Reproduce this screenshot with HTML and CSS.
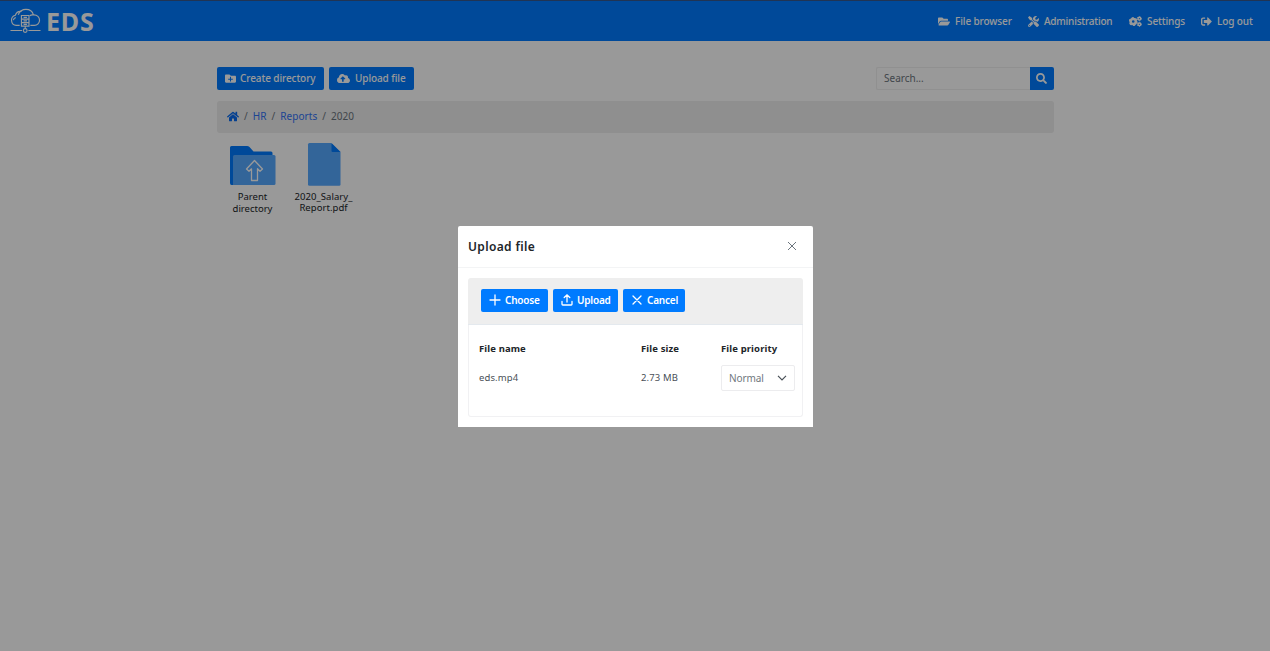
FILE: index.html
```
<!DOCTYPE html>
<html lang="en">
<head>
    <meta charset="UTF-8">
    <meta name="viewport" content="width=device-width, initial-scale=1.0">
    <title>EDS</title>
    <link rel="stylesheet" href="styles.css">
</head>
<body>
    <header class="navbar">
        <a class="brand">
            <svg class="brand-logo" viewBox="0 0 32 26">
                <path d="M10 17.500H6.500a5.300 5.300 0 0 1-1-10.400A5.800 5.800 0 0 1 12 3.200M8.500 6.500C10 2.800 13 1 16.500 1c4 0 6.800 2.500 7.700 5.700 4-.2 6.300 2.400 6.300 5.400s-2.300 5.400-5.300 5.400H21M20.500 7.500c1-.8 2-1 3.500-.8M3.500 12c.3-1.400 1.200-2.300 2.500-2.500"/>
                <path d="M11.800 7.300h7.800v11h-7.800zM11.800 11h7.800M11.800 14.600h7.800M14 9.200h3.500M14 12.800h3.500M14 16.500h3.500M15.700 18.300v2.500M.5 22.800h12M19 22.800h12.500"/>
                <circle cx="15.700" cy="22.800" r="1.900"/>
            </svg>
            <span class="brand-name">EDS</span>
        </a>
        <nav class="menu">
            <a class="menu-browser"><svg class="icon" viewBox="0 0 576 512"><path d="M572.694 292.093L500.27 416.248A63.997 63.997 0 0 1 444.989 448H45.025c-18.523 0-30.064-20.093-20.731-36.093l72.424-124.155A64 64 0 0 1 152 256h399.964c18.523 0 30.064 20.093 20.73 36.093zM152 224h328v-48c0-26.51-21.49-48-48-48H272l-64-64H48C21.49 64 0 85.49 0 112v278.046l69.077-118.418C86.214 242.25 117.989 224 152 224z"/></svg><span>File browser</span></a>
            <a class="menu-admin"><svg class="icon" viewBox="0 0 512 512"><path d="M501.1 395.7L384 278.6c-23.1-23.1-57.6-27.6-85.4-13.9L192 158.1V96L64 0 0 64l96 128h62.1l106.6 106.6c-13.6 27.8-9.2 62.3 13.9 85.4l117.1 117.1c14.6 14.6 38.2 14.6 52.7 0l52.7-52.7c14.5-14.6 14.5-38.2 0-52.7zM331.7 225c28.3 0 54.9 11 74.9 31l19.4 19.4c15.8-6.9 30.8-16.5 43.8-29.5 37.1-37.1 49.7-89.3 37.9-136.7-2.2-9-13.5-12.1-20.1-5.5l-74.4 74.4-67.9-11.3L334 98.9l74.4-74.4c6.6-6.6 3.4-17.9-5.7-20.2-47.400-11.700-99.600.9-136.600 37.900-28.500 28.500-41.900 66.100-41.200 103.600l82.100 82.100c8.100-1.900 16.500-2.900 24.700-2.900zm-103.900 82l-56.700-56.700L18.700 402.800c-25 25-25 65.500 0 90.500s65.500 25 90.500 0l123.600-123.600c-7.600-19.900-9.900-41.600-5-62.700zM64 472c-13.200 0-24-10.800-24-24 0-13.300 10.700-24 24-24s24 10.700 24 24c0 13.200-10.700 24-24 24z"/></svg><span>Administration</span></a>
            <a class="menu-settings"><svg class="icon cogs" viewBox="0 0 640 512">
                <circle cx="208" cy="256" r="128" stroke-width="125"/>
                <circle cx="208" cy="256" r="195" stroke-width="50" stroke-dasharray="102 102.200"/>
                <circle cx="510" cy="115" r="66" stroke-width="72"/>
                <circle cx="510" cy="115" r="102" stroke-width="40" stroke-dasharray="53.400 53.400"/>
                <circle cx="510" cy="397" r="66" stroke-width="72"/>
                <circle cx="510" cy="397" r="102" stroke-width="40" stroke-dasharray="53.400 53.400"/>
            </svg><span>Settings</span></a>
            <a class="menu-logout"><svg class="icon" viewBox="0 0 512 512"><path d="M497 273L329 441c-15 15-41 4.500-41-17v-96H152c-13.300 0-24-10.700-24-24v-96c0-13.300 10.700-24 24-24h136V88c0-21.400 25.900-32 41-17l168 168c9.300 9.400 9.300 24.600 0 34zM192 436v-40c0-6.600-5.400-12-12-12H96c-17.700 0-32-14.300-32-32V160c0-17.700 14.300-32 32-32h84c6.600 0 12-5.400 12-12V76c0-6.600-5.400-12-12-12H96c-53 0-96 43-96 96v192c0 53 43 96 96 96h84c6.600 0 12-5.400 12-12z"/></svg><span>Log out</span></a>
        </nav>
    </header>

    <main class="container">
        <div class="toolbar">
            <button class="btn btn-create"><svg class="icon" viewBox="0 0 512 512"><path d="M464 128H272l-64-64H48C21.490 64 0 85.490 0 112v288c0 26.510 21.490 48 48 48h416c26.510 0 48-21.490 48-48V176c0-26.510-21.490-48-48-48zm-96 168c0 8.840-7.160 16-16 16h-72v72c0 8.840-7.160 16-16 16h-16c-8.840 0-16-7.160-16-16v-72h-72c-8.840 0-16-7.160-16-16v-16c0-8.840 7.160-16 16-16h72v-72c0-8.840 7.160-16 16-16h16c8.840 0 16 7.160 16 16v72h72c8.840 0 16 7.160 16 16v16z"/></svg><span>Create directory</span></button>
            <button class="btn btn-upload"><svg class="icon" viewBox="0 0 640 512"><path d="M537.600 226.600c4.100-10.700 6.400-22.400 6.400-34.600 0-53-43-96-96-96-19.700 0-38.100 6-53.300 16.200C367 64.200 315.300 32 256 32c-88.400 0-160 71.600-160 160 0 2.700.1 5.400.2 8.100C40.200 219.800 0 273.200 0 336c0 79.500 64.500 144 144 144h368c70.700 0 128-57.300 128-128 0-61.900-44-113.600-102.400-125.400zM393.400 288H328v112c0 8.800-7.200 16-16 16h-48c-8.800 0-16-7.200-16-16V288h-65.400c-14.300 0-21.400-17.200-11.300-27.300l105.400-105.400c6.200-6.200 16.400-6.200 22.600 0l105.400 105.400c10.100 10.100 2.900 27.300-11.300 27.300z"/></svg><span>Upload file</span></button>
            <div class="search">
                <input class="search-input" type="text" placeholder="Search...">
                <button class="search-btn"><svg class="icon" viewBox="0 0 512 512"><path d="M505 442.700L405.300 343c-4.500-4.500-10.600-7-17-7H372c27.600-35.300 44-79.700 44-128C416 93.100 322.900 0 208 0S0 93.100 0 208s93.100 208 208 208c48.300 0 92.700-16.400 128-44v16.300c0 6.400 2.500 12.500 7 17l99.700 99.700c9.400 9.400 24.600 9.400 33.900 0l28.300-28.300c9.400-9.400 9.400-24.600.1-34zM208 336c-70.700 0-128-57.200-128-128 0-70.700 57.200-128 128-128 70.700 0 128 57.200 128 128 0 70.700-57.200 128-128 128z"/></svg></button>
            </div>
        </div>

        <div class="breadcrumb">
            <a class="crumb-home"><svg class="icon" viewBox="0 0 576 512"><path d="M280.370 148.260L96 300.110V464a16 16 0 0 0 16 16l112.060-.29a16 16 0 0 0 15.920-16V368a16 16 0 0 1 16-16h64a16 16 0 0 1 16 16v95.640a16 16 0 0 0 16 16.050L464 480a16 16 0 0 0 16-16V300L295.670 148.260a12.190 12.190 0 0 0-15.300 0zM571.600 251.470L488 182.560V44.050a12 12 0 0 0-12-12h-56a12 12 0 0 0-12 12v72.610L318.470 43a48 48 0 0 0-61 0L4.340 251.470a12 12 0 0 0-1.600 16.900l25.500 31A12 12 0 0 0 45.150 301l235.220-193.740a12.190 12.190 0 0 1 15.300 0L530.900 301a12 12 0 0 0 16.900-1.600l25.500-31a12 12 0 0 0-1.700-16.930z"/></svg></a>
            <span>/</span><a>HR</a><span>/</span><a>Reports</a><span>/</span><span>2020</span>
        </div>

        <div class="files">
            <div class="file">
                <svg class="file-icon" viewBox="0 0 46 44">
                    <path fill="#007bff" d="M0 40V4.500Q0 3 1.500 3H17q1.500 0 2.500 1l4 4.500H41q1.500 0 1.500 1.500v5H3v27H1.500Q0 42 0 40z"/>
                    <path fill="#55a8ff" d="M3 42V13.500Q3 12 4.500 12h39.500Q45.500 12 45.500 13.500v27Q45.500 42 44 42z"/>
                    <path fill="#55a8ff" stroke="#fff" stroke-width="1.300" stroke-linejoin="round" d="M24.500 17.500l8 8.500-2.500 2.200-2.500-2.400V37.500h-6V25.800L19 28.200 16.500 26z"/>
                </svg>
                <div>Parent<br>directory</div>
            </div>
            <div class="file file-pdf">
                <svg class="file-icon" viewBox="0 0 46 44">
                    <path fill="#55a8ff" d="M8.500 0H30l9.500 9v32.500q0 1.300-1.300 1.300H8.500Q7 42.800 7 41.500V1.500Q7 0 8.500 0z"/>
                    <path fill="#007bff" d="M30.500 0l9 9h-8q-1 0-1-1z"/>
                </svg>
                <div>2020_Salary_<br>Report.pdf</div>
            </div>
        </div>
    </main>

    <div class="overlay">
        <div class="modal">
            <div class="modal-header">
                <h2 class="modal-title">Upload file</h2>
                <svg class="close" viewBox="0 0 10 10"><path d="M1 1l8 8M9 1L1 9"/></svg>
            </div>
            <div class="modal-body">
                <div class="upload-bar">
                    <button class="btn btn-choose"><svg class="line-icon" viewBox="0 0 12 12"><path d="M6 1v10M1 6h10"/></svg><span>Choose</span></button>
                    <button class="btn btn-send"><svg class="line-icon" viewBox="0 0 12 12"><path d="M6 8V1M3.200 3.600L6 1l2.800 2.600M1 7.500v2.700q0 .8.8.8h8.400q.8 0 .8-.8V7.500"/></svg><span>Upload</span></button>
                    <button class="btn btn-cancel"><svg class="line-icon" viewBox="0 0 12 12"><path d="M2 2l8 8M10 2l-8 8"/></svg><span>Cancel</span></button>
                </div>
                <div class="upload-content">
                    <div class="row row-head">
                        <span class="name">File name</span>
                        <span class="size">File size</span>
                        <span class="priority">File priority</span>
                    </div>
                    <div class="row">
                        <span class="name">eds.mp4</span>
                        <span class="size">2.73 MB</span>
                        <div class="dropdown">
                            <span>Normal</span>
                            <svg class="chevron" viewBox="0 0 10 6"><path d="M1 .8l4 4 4-4"/></svg>
                        </div>
                    </div>
                </div>
            </div>
        </div>
    </div>
</body>
</html>
```
FILE: styles.css
```
* {
    box-sizing: border-box;
}

body {
    margin: 0;
    background-color: #fff;
    color: #212529;
    font-family: "Noto Sans", "Open Sans", sans-serif;
    font-size: 10px;
    overflow: hidden;
}

.icon {
    flex: none;
    height: 10px;
    fill: currentColor;
}

/* Navbar */
.navbar {
    display: flex;
    align-items: center;
    justify-content: space-between;
    height: 41px;
    padding: 0 18px 0 10px;
    border-top: 1px solid #36578c;
    background-color: #007bff;
    color: #fff;
}

.brand {
    display: flex;
    align-items: center;
    gap: 5px;
}

.brand-logo {
    width: 31px;
    height: 26px;
    fill: none;
    stroke: #fff;
    stroke-width: 1.2;
}

.brand-name {
    font-size: 25px;
    font-weight: 700;
    line-height: 26px;
    letter-spacing: 0.8px;
}

.menu {
    display: flex;
    font-weight: 500;
    letter-spacing: -0.1px;
}

.menu a {
    display: flex;
    align-items: center;
    white-space: nowrap;
}

.menu .icon {
    margin-right: 5px;
}

.menu-browser { width: 90px; }
.menu-admin { width: 101px; }
.menu-settings { width: 72px; }
.menu-logout { width: 51px; }

.menu-admin { letter-spacing: -0.2px; }

.menu-browser .icon { width: 12px; height: 11px; }
.menu-admin .icon { width: 11px; height: 11px; }
.menu-settings .icon { width: 13px; height: 11px; }
.menu-logout .icon { width: 11px; height: 11px; }

.cogs circle {
    fill: none;
    stroke: currentColor;
}

/* Main area */
.container {
    width: 837px;
    margin: 26px 0 0 217px;
}

.toolbar {
    display: flex;
    gap: 5px;
}

.btn {
    display: flex;
    align-items: center;
    height: 23px;
    padding: 0 8px 1px;
    border: none;
    border-radius: 2px;
    background-color: #007bff;
    color: #fff;
    font-family: inherit;
    font-size: 10px;
    font-weight: 500;
    white-space: nowrap;
}

.btn-create {
    width: 107px;
    letter-spacing: -0.1px;
}

.btn-upload {
    width: 85px;
    letter-spacing: -0.1px;
}

.btn-create .icon { width: 11px; height: 11px; margin-right: 4px; }
.btn-upload .icon { width: 13px; height: 11px; margin-right: 5px; }

.search {
    display: flex;
    margin-left: auto;
}

.search-input {
    width: 154px;
    height: 23px;
    padding: 0 7px 2px;
    border: 1px solid #f0f0f0;
    border-right: none;
    border-radius: 2px 0 0 2px;
    font-family: inherit;
    font-size: 10px;
}

.search-input::placeholder {
    color: #6c757d;
}

.search-btn {
    display: flex;
    align-items: center;
    justify-content: center;
    width: 24px;
    height: 23px;
    padding: 0 1px 0 0;
    border: none;
    border-radius: 0 2px 2px 0;
    background-color: #007bff;
    color: #fff;
}

.search-btn .icon {
    width: 11px;
    height: 11px;
}

.breadcrumb {
    display: flex;
    align-items: center;
    gap: 5px;
    height: 32px;
    margin-top: 11px;
    padding: 0 10px 2px;
    border-radius: 3px;
    background-color: #eee;
    color: #6c757d;
    letter-spacing: 0.05px;
}

.breadcrumb a {
    color: #3273f5;
}

.crumb-home {
    display: flex;
}

.crumb-home .icon {
    width: 12px;
    height: 11px;
    fill: #0a6cf0;
}

/* Files */
.files {
    display: flex;
    margin-top: 10px;
}

.file {
    width: 71px;
    text-align: center;
    font-size: 9.5px;
    line-height: 12px;
}

.file-pdf {
    line-height: 11px;
    letter-spacing: 0.05px;
}

.file-icon {
    display: block;
    width: 46px;
    height: 44px;
    margin: 0 auto 4px;
}

/* Upload dialog */
.overlay {
    position: fixed;
    inset: 0;
    display: flex;
    align-items: center;
    justify-content: center;
    padding: 2px 0 0 1px;
    background-color: rgba(0, 0, 0, 0.4);
}

.modal {
    width: 355px;
    height: 201px;
    border-radius: 2px 2px 0 0;
    background-color: #fff;
}

.modal-header {
    display: flex;
    align-items: center;
    justify-content: space-between;
    height: 42px;
    padding: 0 16px 1px 10px;
    border-bottom: 1px solid #f3f4f5;
}

.modal-title {
    margin: 0;
    font-size: 12px;
    font-weight: 600;
    letter-spacing: 0.35px;
}

.close {
    width: 10px;
    height: 10px;
    fill: none;
    stroke: #6c757d;
}

.modal-body {
    padding: 10px;
}

.upload-bar {
    display: flex;
    gap: 5px;
    height: 47px;
    padding: 11px 13px;
    border-bottom: 1px solid #e4e9ee;
    border-radius: 3px 3px 0 0;
    background-color: #eee;
}

.upload-bar .btn {
    font-weight: 600;
    letter-spacing: -0.2px;
}

.line-icon {
    flex: none;
    width: 12px;
    height: 12px;
    margin-right: 4px;
    fill: none;
    stroke: #fff;
    stroke-width: 1.3;
    stroke-linecap: round;
}

.btn-choose { width: 67px; }
.btn-send { width: 65px; }
.btn-cancel { width: 62px; }

.upload-content {
    height: 92px;
    padding: 15px 7px 0 10px;
    border: 1px solid #f1f1f3;
    border-top: none;
    border-radius: 0 0 3px 3px;
}

.row {
    display: flex;
    align-items: center;
    height: 26px;
    color: #495057;
    font-size: 9.5px;
    letter-spacing: 0.12px;
}

.row-head {
    height: 16px;
    margin-bottom: 9px;
    color: #212529;
    font-weight: 700;
}

.name { width: 162px; }
.size { width: 80px; }

.row > .name,
.row > .size {
    padding-bottom: 1px;
}

.row-head > .name,
.row-head > .size {
    padding-bottom: 0;
}

.dropdown {
    display: flex;
    align-items: center;
    justify-content: space-between;
    width: 74px;
    height: 26px;
    padding: 0 7px;
    border: 1px solid #ececee;
    border-radius: 2px;
    color: #70777e;
    font-size: 10px;
    letter-spacing: -0.1px;
}

.chevron {
    width: 10px;
    height: 6px;
    fill: none;
    stroke: #495057;
    stroke-width: 1.2;
}
```
